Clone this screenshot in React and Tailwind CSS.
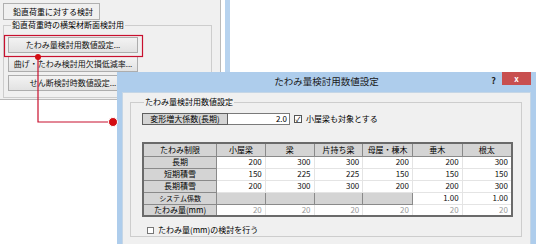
import React from 'react';

const cols = ['小屋梁', '梁', '片持ち梁', '母屋・棟木', '垂木', '根太'];
const colW = [49, 49, 49, 50, 50, 50];

const rows = [
    { label: '長期', values: ['200', '300', '300', '200', '200', '300'] },
    { label: '短期積雪', values: ['150', '225', '225', '150', '150', '150'] },
    { label: '長期積雪', values: ['200', '300', '300', '200', '200', '300'] },
    { label: 'システム係数', values: [null, null, null, null, '1.00', '1.00'], small: true },
    { label: 'たわみ量(mm)', values: ['20', '20', '20', '20', '20', '20'], muted: true },
];

const LeftButton = ({ children }) => (
    <div className="w-[130px] h-[16px] border border-[#adadad] bg-linear-to-b from-[#f3f3f3] to-[#e2e2e2] flex items-center justify-center text-[8px] leading-none text-[#111]">
        {children}
    </div>
);

const App = () => {
    return (
        <div className="relative w-[536px] h-[244px] overflow-hidden bg-white font-['Noto_Sans_CJK_JP','Noto_Sans',sans-serif] text-black">
            {/* 背景のウィンドウ */}
            <div className="flex h-full">
                <div className="w-[221px] shrink-0">
                    <div className="h-[100px] bg-[#f0f0f0] border-r border-b border-[#b9b9b9] pt-[3px] pl-[3px]">
                        <div className="w-[97px] h-[17px] border border-[#b0b0b0] flex items-center pl-[9px] text-[8px] leading-none">
                            鉛直荷重に対する検討
                        </div>
                        <fieldset className="w-[209px] h-[78px] border border-[#cdcdcd] pl-[4px]">
                            <legend className="ml-[3px] px-[1px] text-[8px] leading-[10px]">鉛直荷重時の横架材断面検討用</legend>
                            <div className="mt-[7px] flex flex-col gap-[3px]">
                                <LeftButton>たわみ量検討用数値設定...</LeftButton>
                                <LeftButton>曲げ・たわみ検討用欠損低減率...</LeftButton>
                                <LeftButton>せん断検討時数値設定...</LeftButton>
                            </div>
                        </fieldset>
                    </div>
                </div>
                <div className="w-[4px] bg-white" />
                <div className="w-[5px] bg-[#b7d3ef]" />
                <div className="flex-1 bg-white" />
            </div>

            {/* ダイアログ */}
            <div className="absolute left-[117px] top-[72px] w-[419px] h-[180px] bg-[#aecdec] flex flex-col">
                <div className="relative h-[20px] flex items-center justify-center text-[9.5px] leading-none text-[#1a1a1a]">
                    たわみ量検討用数値設定
                    <span className="absolute right-[40px] top-[4px] text-[9px] font-bold leading-none text-[#222]">?</span>
                    <div className="absolute right-[5px] top-0 w-[29px] h-[13px] bg-[#c84f4f] flex items-center justify-center text-white text-[8px] font-bold leading-none">x</div>
                </div>
                <div className="mx-[5px] flex-1 bg-[#f0f0f0] border border-[#c5d6e6] pt-[4px] pl-[7px] pr-[8px]">
                    <fieldset className="h-[140px] border border-[#cdcdcd] pl-[11px]">
                        <legend className="ml-[2px] px-[1px] text-[8px] leading-[10px]">たわみ量検討用数値設定</legend>
                        <div className="mt-[6px] flex items-center h-[12px]">
                            <div className="w-[86px] h-[12px] bg-[#d4d4d4] border border-[#5f5f5f] flex items-center justify-center text-[8px] leading-none">
                                変形増大係数(長期)
                            </div>
                            <div className="w-[62px] h-[12px] bg-white border border-[#7a7a7a] border-l-0 flex items-center justify-end pr-[2px] text-[8px] leading-none">
                                2.0
                            </div>
                            <div className="ml-[4px] w-[8px] h-[8px] border border-[#555] bg-white flex items-center justify-center text-[7px] leading-none">✓</div>
                            <span className="ml-[4px] text-[8px] leading-none">小屋梁も対象とする</span>
                        </div>

                        <table className="mt-[17px] border-collapse border-2 border-[#6a6a6a] text-[8px] leading-none" style={{ width: 371 }}>
                            <thead>
                                <tr className="h-[13px]">
                                    <th className="w-[74px] bg-[#d4d4d4] border border-[#8a8a8a] font-normal">たわみ制限</th>
                                    {cols.map((c, i) => (
                                        <th key={c} className="bg-[#d4d4d4] border border-[#8a8a8a] font-normal" style={{ width: colW[i] }}>{c}</th>
                                    ))}
                                </tr>
                            </thead>
                            <tbody>
                                {rows.map(row => (
                                    <tr key={row.label} className="h-[12px]">
                                        <td className={`bg-[#d4d4d4] border border-[#8a8a8a] text-center ${row.small ? 'text-[7px]' : ''}`}>{row.label}</td>
                                        {row.values.map((v, i) => (
                                            v === null ? (
                                                <td key={i} className="bg-[#d4d4d4] border border-[#8a8a8a]"></td>
                                            ) : (
                                                <td key={i} className={`bg-white border-r border-b border-[#e4e4e4] text-right pr-[3px] ${row.muted ? 'text-[#9a9a9a]' : 'text-[#111]'}`}>{v}</td>
                                            )
                                        ))}
                                    </tr>
                                ))}
                            </tbody>
                        </table>

                        <div className="mt-[8px] ml-[5px] flex items-center h-[10px]">
                            <div className="w-[7px] h-[7px] border border-[#777] bg-white" />
                            <span className="ml-[4px] text-[8px] leading-none">たわみ量(mm)の検討を行う</span>
                        </div>
                    </fieldset>
                </div>
            </div>

            {/* 注釈 */}
            <svg className="absolute inset-0 pointer-events-none" width="536" height="244">
                <rect x="4.5" y="35.5" width="138" height="21" fill="none" stroke="#c8102e" strokeWidth="1.2" />
                <polyline points="38,57 38,122 113,122" fill="none" stroke="#c8102e" strokeWidth="1.2" />
                <circle cx="38" cy="57" r="3" fill="#d40d12" />
                <circle cx="113" cy="122" r="4.5" fill="#d40d12" stroke="#fff" strokeWidth="1" />
            </svg>
        </div>
    );
};

export default App;
